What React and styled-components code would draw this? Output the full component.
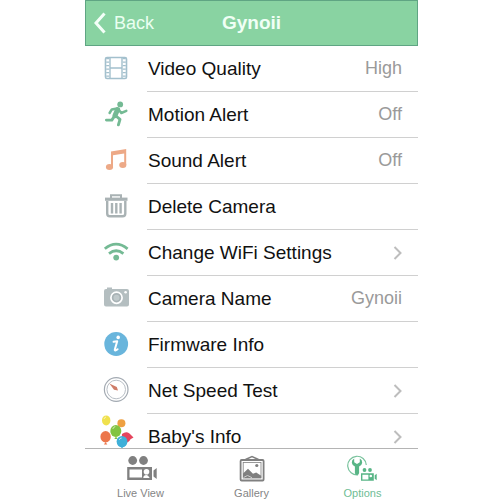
import React from "react";
import styled, { createGlobalStyle } from "styled-components";

const FilmIcon = () => (
  <Icon viewBox="0 0 36 36" fill="none" stroke="#a3c0cd">
    <rect x="7.5" y="6.5" width="21" height="21" rx="1.5" strokeWidth="1.6" />
    <path d="M12 7v20M24 7v20M12 17h12" strokeWidth="1.4" />
    <path d="M9.7 7v20M26.3 7v20" strokeWidth="3" strokeDasharray="1.3 2.2" />
  </Icon>
);

const RunnerIcon = () => (
  <Icon viewBox="0 0 36 36" fill="none" stroke="#74ba94" strokeLinecap="round" strokeLinejoin="round">
    <circle cx="22.2" cy="7.4" r="2.9" fill="#74ba94" stroke="none" />
    <path d="M19.6 12.6L17 18.6" strokeWidth="5" />
    <path d="M19 11.4l-5.2 1-2.2 3.6M20.5 12.4l2.8 3.6 5-2.2" strokeWidth="2.5" />
    <path d="M18 19l4 3.4-1.6 5.4M16.2 19.5l-2.4 3.6H8.4" strokeWidth="2.9" />
  </Icon>
);

const MusicIcon = () => (
  <Icon viewBox="0 0 36 36" fill="#eda987">
    <path d="M13 8.4L28.2 6V22h-2V10.6L15 12.2V24h-2z" />
    <ellipse cx="11.5" cy="24" rx="3.6" ry="3" />
    <ellipse cx="24.8" cy="22" rx="3.6" ry="3" />
  </Icon>
);

const TrashIcon = () => (
  <Icon viewBox="0 0 36 36" fill="none" stroke="#a9b2b4">
    <path d="M13 9V6.3h10V9" strokeWidth="2" />
    <path d="M7 10.2h22.5" strokeWidth="3.2" />
    <path d="M9.2 12v12.5q0 2.7 2.7 2.7h12.7q2.7 0 2.7-2.7V12" strokeWidth="2.4" />
    <path d="M14 14v10.5M18.3 14v10.5M22.6 14v10.5" strokeWidth="2.4" />
  </Icon>
);

const WifiIcon = () => (
  <Icon viewBox="0 0 36 36" fill="none" stroke="#74ba94" strokeWidth="2.8">
    <path d="M6.8 13.8Q18 4.4 29.6 13.8" />
    <path d="M11 18.6q7.2-5.6 14.4 0" />
    <circle cx="18.2" cy="22.6" r="2.9" fill="#74ba94" stroke="none" />
  </Icon>
);

const CameraIcon = () => (
  <Icon viewBox="0 0 36 36">
    <path d="M9 8V6.5h5V8h15q2 0 2 2v13.5q0 2-2 2H8q-2 0-2-2V10q0-2 2-2z" fill="#b4bec0" />
    <circle cx="18.5" cy="16.7" r="5.6" fill="#a9b3b6" stroke="#fff" strokeWidth="1.7" />
    <circle cx="18.5" cy="16.7" r="3" fill="#c0c9cb" />
    <circle cx="27.6" cy="11.3" r="1.3" fill="#fff" />
  </Icon>
);

const InfoIcon = () => (
  <Icon viewBox="0 0 36 36">
    <circle cx="18.2" cy="17" r="11.9" fill="#69b5dc" />
    <circle cx="20.2" cy="10.4" r="1.8" fill="#fff" />
    <path
      d="M15.6 14.8l3.6-.6-2.4 8.4q-.3 2 2.8-.4"
      fill="none"
      stroke="#fff"
      strokeWidth="2"
      strokeLinecap="round"
      strokeLinejoin="round"
    />
  </Icon>
);

const GaugeIcon = () => (
  <Icon viewBox="0 0 36 36" fill="none">
    <circle cx="18.2" cy="16.5" r="11.8" stroke="#a3aab2" strokeWidth="1.2" />
    <circle cx="18.2" cy="16.5" r="9.3" stroke="#b9bfc6" strokeWidth="1" />
    <path d="M11.4 10.4l7.4 3.6 1.2 3.4-4-.6z" fill="#cf7d69" />
  </Icon>
);

const BalloonsIcon = () => (
  <Icon viewBox="0 0 36 36">
    <ellipse cx="8.2" cy="1.4" rx="4.2" ry="5" fill="#f0e14e" />
    <circle cx="23.4" cy="4.2" r="4" fill="#eea042" />
    <ellipse cx="7.6" cy="17.8" rx="5.2" ry="5.7" fill="#ec774c" />
    <path d="M7.6 23l-1.7 2.4h3.4z" fill="#ec774c" />
    <path d="M24 15q4-3 7.5-.5l4 4-3 1.7q-2 3.8-5.5 3.3-4-2.5-3-8.5z" fill="#e5455d" />
    <ellipse cx="17.8" cy="12" rx="5.5" ry="6" fill="#82c341" />
    <path d="M18 17.5L16.3 20h3.4z" fill="#82c341" />
    <ellipse cx="24" cy="22.6" rx="5.4" ry="5.7" fill="#3fb0d9" />
    <path d="M24 27.5l-1.7 2.4h3.4z" fill="#3fb0d9" />
    <path
      d="M6 0q.5-1.8 2-2M14.8 10q.6-2 2.5-2.5M21.2 21q.6-2 2.5-2"
      stroke="#fff"
      strokeOpacity=".6"
      fill="none"
    />
  </Icon>
);

const LiveIcon = () => (
  <TabIcon viewBox="0 0 32 30" fill="#808080">
    <circle cx="7.7" cy="7.5" r="4.4" />
    <circle cx="18.5" cy="7.5" r="4.4" />
    <path fillRule="evenodd" d="M2.2 14H27v13H2.2zM4.5 16.5v8H17v-8z" />
    <circle cx="21.5" cy="18.8" r="2.8" fill="#fff" />
    <path d="M18.3 25q0-3 3.2-3 1.5 0 3.2 3z" fill="#fff" />
    <path d="M31.7 15v11l-3.2-2.5v-6z" />
  </TabIcon>
);

const GalleryIcon = () => (
  <TabIcon viewBox="0 0 32 30" fill="none" stroke="#808080">
    <path d="M9.5 6.5L16 3.6l6.5 2.9" strokeWidth="1.5" />
    <rect x="4.6" y="7" width="23" height="20.5" rx="1" strokeWidth="1.8" />
    <rect x="7.2" y="9.5" width="17.8" height="15.5" strokeWidth=".8" />
    <circle cx="20.8" cy="12.5" r="1.6" fill="#808080" stroke="none" />
    <path d="M7 20.5l5-4.7 5 5 3.2-1.4 5 3.4V25H7z" fill="#808080" stroke="none" />
    <path d="M7.5 24.5l4-2 4.5 2.2" stroke="#ccc" strokeWidth="1" />
  </TabIcon>
);

const OptionsIcon = () => (
  <TabIcon viewBox="0 0 32 30" fill="#58b586">
    <path d="M11 21.8A9.3 9.3 0 1 1 19.3 12" fill="none" stroke="#79c39d" strokeWidth="1.2" />
    <path d="M7.2 5.5v3.8l2.8 1.6 2.8-1.6V5.5q2.6 1.5 2.4 4.3-.2 2.2-3.1 3.8V20q-.2 2-2.1 2t-2.1-2v-6.4q-2.9-1.6-3.1-3.8Q4.6 7 7.2 5.5z" />
    <circle cx="17.5" cy="17" r="1.9" />
    <circle cx="23" cy="17" r="1.9" />
    <path fillRule="evenodd" d="M14 20.3h12.8v7.5H14zM15.4 21.7v4.7h6v-4.7z" />
    <circle cx="23.8" cy="23" r="1.3" fill="#fff" />
    <path d="M29.7 20.7v6.6l-2-1.5v-3.6z" />
  </TabIcon>
);

const rows = [
  { label: "Video Quality", icon: FilmIcon, value: "High" },
  { label: "Motion Alert", icon: RunnerIcon, value: "Off" },
  { label: "Sound Alert", icon: MusicIcon, value: "Off" },
  { label: "Delete Camera", icon: TrashIcon },
  { label: "Change WiFi Settings", icon: WifiIcon, more: true },
  { label: "Camera Name", icon: CameraIcon, value: "Gynoii" },
  { label: "Firmware Info", icon: InfoIcon },
  { label: "Net Speed Test", icon: GaugeIcon, more: true },
  { label: "Baby's Info", icon: BalloonsIcon, more: true },
];

const tabs = [
  { label: "Live View", href: "#live", icon: LiveIcon },
  { label: "Gallery", href: "#gallery", icon: GalleryIcon },
  { label: "Options", href: "#options", icon: OptionsIcon, active: true },
];

const App = () => {
  return (
    <Page>
      <GlobalStyle />
      <Header>
        <BackButton type="button">
          <BackArrow viewBox="0 0 12 22">
            <path d="M10.5 1.5L2 11l8.5 9.5" fill="none" stroke="#f4fff8" strokeWidth="3" />
          </BackArrow>
          Back
        </BackButton>
        <Title>Gynoii</Title>
      </Header>
      <List>
        {rows.map(({ label, icon: RowIcon, value, more }) => (
          <li key={label}>
            <Row type="button">
              <RowIcon />
              <RowBody>
                <span>{label}</span>
                {value && <Value>{value}</Value>}
                {more && (
                  <Chevron viewBox="0 0 9 14">
                    <path d="M1.5 1l6 6-6 6" fill="none" stroke="#bdbdbd" strokeWidth="2" />
                  </Chevron>
                )}
              </RowBody>
            </Row>
          </li>
        ))}
      </List>
      <TabBar>
        {tabs.map(({ label, href, icon: Glyph, active }) => (
          <Tab key={label} href={href} $active={active}>
            <Glyph />
            {label}
          </Tab>
        ))}
      </TabBar>
    </Page>
  );
};

const GlobalStyle = createGlobalStyle`
  * {
    box-sizing: border-box;
  }
  body {
    margin: 0;
    background: #fff;
    font-family: "Liberation Sans", Arial, sans-serif;
  }
`;

const Page = styled.div`
  display: flex;
  flex-direction: column;
  height: 100vh;
  padding: 0 82px 0 85px;
`;

const Header = styled.header`
  display: grid;
  grid-template-columns: 1fr auto 1fr;
  align-items: center;
  flex: none;
  height: 46px;
  border: 1px solid #5fa583;
  background-color: #89d3a2;
`;

const BackButton = styled.button`
  display: flex;
  align-items: center;
  gap: 8px;
  justify-self: start;
  padding: 0 8px;
  border: 0;
  background: none;
  color: #eafff1;
  font-family: inherit;
  font-size: 18px;
`;

const BackArrow = styled.svg`
  width: 12px;
  height: 22px;
`;

const Title = styled.h1`
  margin: 0;
  color: #f0fff5;
  font-size: 19px;
  font-weight: bold;
`;

const List = styled.ul`
  flex: 1;
  min-height: 0;
  margin: 0;
  padding: 0;
  overflow: hidden;
  list-style: none;
`;

const Row = styled.button`
  display: flex;
  align-items: center;
  width: 100%;
  height: 46px;
  padding: 0 0 0 13px;
  border: 0;
  background: none;
  color: #111;
  font-family: inherit;
  font-size: 19px;
  text-align: left;
`;

const Icon = styled.svg`
  flex: none;
  width: 36px;
  height: 36px;
  margin-right: 13px;
  overflow: visible;
`;

const RowBody = styled.span`
  display: flex;
  flex: 1;
  align-items: center;
  justify-content: space-between;
  height: 100%;
  padding: 0 16px 0 1px;
  border-bottom: 1px solid #d0d0d0;
`;

const Value = styled.span`
  color: #9a9a9a;
  font-size: 18px;
`;

const Chevron = styled.svg`
  width: 9px;
  height: 14px;
`;

const TabBar = styled.nav`
  display: flex;
  flex: none;
  height: 52px;
  border-top: 1px solid #b4b4b4;
`;

const Tab = styled.a`
  display: flex;
  flex: 1;
  flex-direction: column;
  align-items: center;
  padding-top: 4px;
  color: ${(props) => (props.$active ? "#6fbd95" : "#858585")};
  font-size: 11px;
  line-height: 20px;
  text-decoration: none;
`;

const TabIcon = styled.svg`
  flex: none;
  width: 32px;
  height: 30px;
`;

export default App;
